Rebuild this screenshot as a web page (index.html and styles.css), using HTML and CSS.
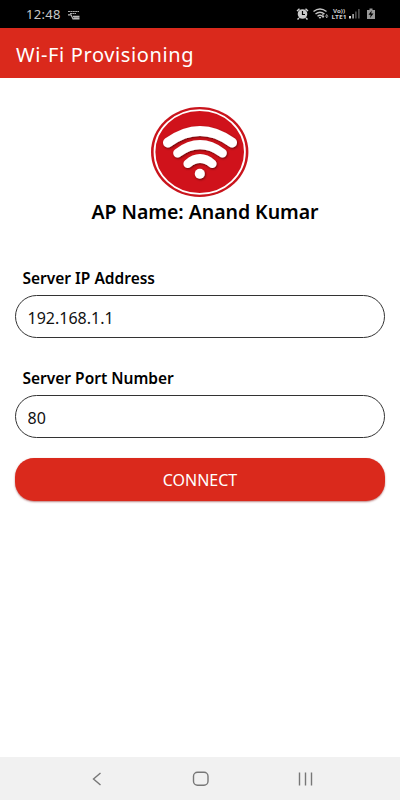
FILE: index.html
```html
<!DOCTYPE html>
<html lang="en">
<head>
  <meta charset="utf-8">
  <title>Wi-Fi Provisioning</title>
  <link rel="stylesheet" href="styles.css">
</head>
<body>
  <div class="screen">
    <div class="status-bar">
      <span class="clock">12:48</span>
      <svg class="notification" width="13" height="11" viewBox="0 0 13 11">
        <path d="M0 1.500h11M2 3.500h6" stroke="#aaa" stroke-width="1.200" stroke-dasharray="2 .4"/>
        <path d="M0 4.800h3l2 4.200h6.500M5 6.300h6.500M5.500 7.800h6" fill="none" stroke="#bbb" stroke-width="1.200"/>
      </svg>
      <svg class="status-icons" width="84" height="16" viewBox="296 6 84 16">
        <!-- alarm -->
        <circle cx="302.500" cy="14" r="4.800" fill="#ccc"/>
        <path d="M297 11l2.500-2.200M308 11l-2.500-2.200M299 18l-1.500 1.500M306 18l1.500 1.500" stroke="#ccc" stroke-width="1.500"/>
        <path d="M302.500 11v3.500h2.500" fill="none" stroke="#000" stroke-width="1.200"/>
        <!-- wifi -->
        <g fill="none" stroke="#c4c4c4" stroke-width="1.400">
          <path d="M313.500 11.500Q320 6.500 326.500 11.500M315.500 14Q320 10.500 324.500 14M317.500 16.300Q320 14.300 322 16"/>
        </g>
        <path d="M318.600 17h2.800L320 19zM321.500 16h3l-1.500 2.300zM325 16.500h3.500L326.700 14zM322.300 14h1.200v3h-1.200zM326.200 15.500h1.100v2.500h-1.100z" fill="#c4c4c4"/>
        <!-- mobile network -->
        <text class="network" x="333" y="12.500" textLength="12" lengthAdjust="spacingAndGlyphs">Vo))</text>
        <text class="network" x="331.500" y="19" textLength="15" lengthAdjust="spacingAndGlyphs">LTE1</text>
        <path d="M349 16h2v2.500h-2z" fill="#ddd"/>
        <path d="M352.300 14h1.600v4.500h-1.600z" fill="#aaa"/>
        <path d="M355 11.500h1.700v7H355zM358 9h1.700v9.500H358z" fill="#4c4c4c"/>
        <!-- battery -->
        <path d="M369.500 8.500h3V10h2.500v9h-8v-9h2.500z" fill="#999"/>
        <path d="M371.700 10.500l-3.200 4.200h2.200l-.7 3.300 3.500-4.500h-2.300z" fill="#000"/>
      </svg>
    </div>

    <header class="app-bar"><h1>Wi-Fi Provisioning</h1></header>

    <main class="content">
      <svg class="logo" width="100" height="92" viewBox="150 106 100 92">
        <defs>
          <filter id="shadow" x="-20%" y="-20%" width="140%" height="150%">
            <feDropShadow dx="0.700" dy="1" stdDeviation="0.800" flood-color="#400" flood-opacity="0.800"/>
          </filter>
        </defs>
        <ellipse cx="199.700" cy="152" rx="48.700" ry="45" fill="#c9141c"/>
        <ellipse cx="199.700" cy="152" rx="45.200" ry="41.800" fill="#d0121b" stroke="#fff" stroke-width="1.800"/>
        <g filter="url(#shadow)" fill="none" stroke="#fff" stroke-linecap="round">
          <path d="M168 142.500Q200 119.500 232 142.500" stroke-width="10"/>
          <path d="M177.700 153Q200 136.400 222.300 153" stroke-width="9"/>
          <path d="M187.700 163.700Q200 153.300 212.300 163.700" stroke-width="8.500"/>
          <circle cx="199.800" cy="173.700" r="5" fill="#fff" stroke="none"/>
        </g>
      </svg>
      <h2 class="ap-name">AP Name: Anand Kumar</h2>

      <form class="server-form">
        <label class="label" for="ip">Server IP Address</label>
        <input class="field" id="ip" type="text" value="192.168.1.1">
        <label class="label" for="port">Server Port Number</label>
        <input class="field" id="port" type="text" value="80">
        <button class="connect" type="button">CONNECT</button>
      </form>
    </main>

    <nav class="nav-bar">
      <svg width="10" height="14" viewBox="0 0 10 14"><path d="M8.500 1L1.500 7l7 6"/></svg>
      <svg width="18" height="16" viewBox="0 0 18 16"><rect x="2.500" y="1.300" width="14.500" height="13" rx="4"/></svg>
      <svg width="16" height="14" viewBox="0 0 16 14"><path d="M1.500 .5v13M7.500 .5v13M13.500 .5v13"/></svg>
    </nav>
  </div>
</body>
</html>
```
FILE: styles.css
```css
* {
  box-sizing: border-box;
}

body {
  margin: 0;
  font-family: "Noto Sans", sans-serif;
  background-color: #fff;
  color: #000;
}

.screen {
  display: flex;
  flex-direction: column;
  height: 800px;
}

.status-bar {
  display: flex;
  align-items: center;
  height: 28px;
  padding: 0 20px 0 26px;
  background-color: #000;
}

.clock {
  width: 42px;
  color: #c8c8c8;
  font-size: 13px;
  line-height: 28px;
  letter-spacing: 0.3px;
}

.notification {
  margin-top: 3px;
}

.status-icons {
  margin-left: auto;
}

.network {
  fill: #ccc;
  font-size: 5.5px;
  font-weight: bold;
}

.app-bar {
  height: 50px;
  padding-left: 16px;
  background-color: #da291c;
}

h1 {
  margin: 0;
  color: #fff;
  font-size: 20px;
  font-weight: 400;
  line-height: 53px;
  letter-spacing: 0.63px;
}

.content {
  display: flex;
  flex: 1;
  flex-direction: column;
  align-items: center;
  padding: 28px 15px 0;
}

.ap-name {
  margin: 0 0 0 10px;
  font-size: 19.5px;
  font-weight: 600;
  line-height: 28px;
  letter-spacing: -0.05px;
}

.server-form {
  display: flex;
  flex-direction: column;
  width: 100%;
  margin-top: 40px;
}

.label {
  height: 29px;
  padding-left: 7.5px;
  font-size: 15.5px;
  font-weight: 600;
  line-height: 24px;
}

.field {
  width: 370px;
  height: 43px;
  margin-bottom: 28px;
  padding: 2px 11.5px 0;
  border: 1px solid #333;
  border-radius: 22px;
  background-color: #fff;
  font-family: inherit;
  font-size: 16px;
  color: #111;
}

.connect {
  width: 370px;
  height: 43px;
  margin-top: -8px;
  padding: 1px 0 0;
  border: none;
  border-radius: 19px;
  background-color: #da291c;
  box-shadow: 0 1px 2px rgba(120, 0, 0, 0.5);
  color: #fff;
  font-family: inherit;
  font-size: 16px;
}

.nav-bar {
  display: flex;
  justify-content: space-between;
  align-items: center;
  height: 43px;
  padding: 1px 86px 0 92px;
  background-color: #f1f1f1;
}

.nav-bar svg {
  fill: none;
  stroke: #777;
  stroke-width: 1.4;
}
```
